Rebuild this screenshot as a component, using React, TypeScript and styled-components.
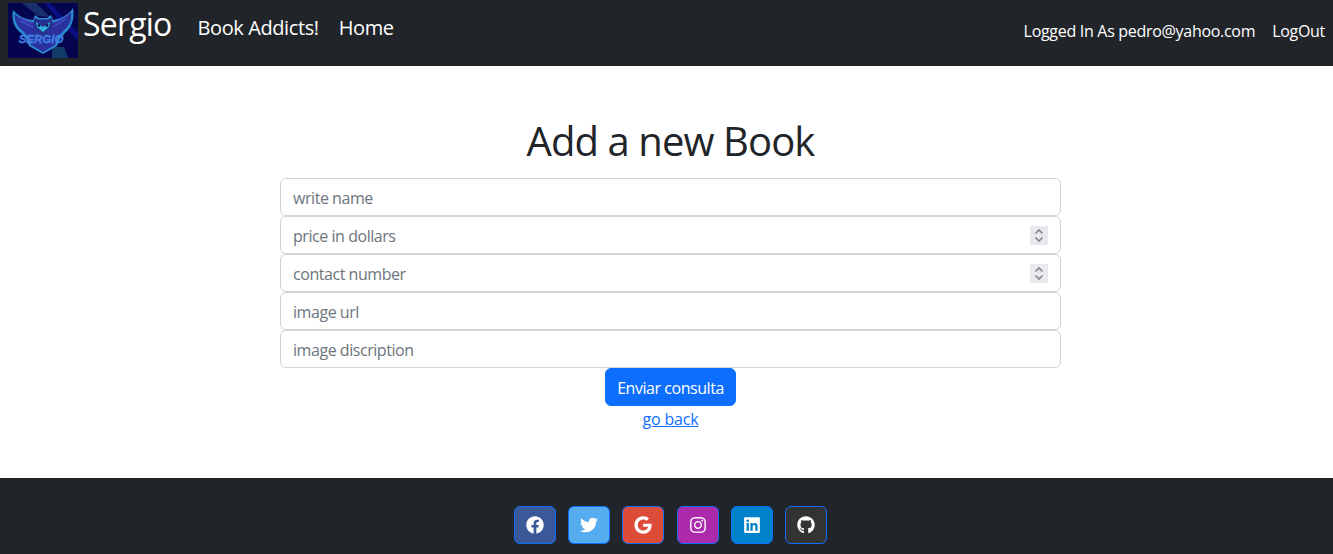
import React from "react";
import styled, { createGlobalStyle } from "styled-components";
import { FaFacebook, FaTwitter, FaGoogle, FaInstagram, FaLinkedin, FaGithub } from "react-icons/fa";

const Global = createGlobalStyle`
  html, body { margin: 0; padding: 0; background: #fff; }
  body { font-family: "Open Sans", "Noto Sans", "Liberation Sans", sans-serif; font-size: 16px; color: #212529; }
  * { box-sizing: border-box; }
`;

const Page = styled.div`
  display: flex;
  flex-direction: column;
  height: 554px;
  overflow: hidden;
`;

const Navbar = styled.nav`
  flex: 0 0 66px;
  background: #212529;
  display: flex;
  align-items: flex-start;
  padding: 3px 8px 0;
  color: #fff;
`;

const Logo = styled.svg`
  width: 70px;
  height: 55px;
  display: block;
  flex: none;
`;

const Brand = styled.a`
  font-size: 32px;
  line-height: 40px;
  margin: 1px 0 0 5px;
  letter-spacing: -0.8px;
`;

const NavLinks = styled.div`
  display: flex;
  gap: 20px;
  margin: 9px 0 0 26px;
`;

const NavLink = styled.a`
  font-size: 20px;
  line-height: 32px;
  letter-spacing: -0.4px;
`;

const Right = styled.div`
  margin-left: auto;
  display: flex;
  gap: 17px;
  margin-top: 16px;
`;

const RightLink = styled.a`
  font-size: 16px;
  line-height: 24px;
  letter-spacing: -0.3px;
`;

const Main = styled.main`
  flex: 1;
  display: flex;
  flex-direction: column;
  align-items: center;
  padding: 47px 0 0 8px;
`;

const Title = styled.h1`
  margin: 0 0 9px;
  font-weight: 400;
  font-size: 40px;
  line-height: 56px;
  letter-spacing: -0.9px;
`;

const Form = styled.form`
  width: 781px;
  display: flex;
  flex-direction: column;
  align-items: center;
`;

const FieldWrap = styled.div`
  position: relative;
  width: 100%;
`;

const Field = styled.input`
  display: block;
  width: 100%;
  height: 38px;
  padding: 7px 12px 5px;
  border: 1px solid #ced4da;
  border-radius: 6px;
  font: inherit;
  letter-spacing: -0.45px;
  color: #212529;
  background: #fff;
  outline: none;
  appearance: textfield;
  &::placeholder { color: #6c757d; opacity: 1; }
  &::-webkit-inner-spin-button, &::-webkit-outer-spin-button { appearance: none; margin: 0; }
`;

const Spinner = styled.svg`
  position: absolute;
  top: 10px;
  right: 13px;
  width: 18px;
  height: 19px;
  background: #e9e9ed;
`;

const Submit = styled.button`
  height: 38px;
  width: 131px;
  padding: 2px 0 0;
  border: 1px solid #0d6efd;
  border-radius: 6px;
  background: #0d6efd;
  color: #fff;
  font: inherit;
  letter-spacing: -0.45px;
`;

const Back = styled.a`
  margin-top: 1px;
  color: #0d6efd;
  text-decoration: underline;
  line-height: 24px;
  letter-spacing: -0.2px;
`;

const Footer = styled.footer`
  flex: 0 0 76px;
  background: #212529;
  display: flex;
  justify-content: center;
  gap: 12.2px;
  padding: 28px 0 0 8px;
`;

const Social = styled.a<{ $bg: string }>`
  width: 42px;
  height: 38px;
  display: flex;
  align-items: center;
  justify-content: center;
  background: ${(p) => p.$bg};
  border: 1px solid #0d6efd;
  border-radius: 6px;
  color: #fff;
  font-size: 18px;
`;

const socials = [
  { bg: "#3b5998", icon: <FaFacebook /> },
  { bg: "#55acee", icon: <FaTwitter /> },
  { bg: "#dd4b39", icon: <FaGoogle /> },
  { bg: "#ac2bac", icon: <FaInstagram /> },
  { bg: "#0082ca", icon: <FaLinkedin /> },
  { bg: "#333333", icon: <FaGithub /> },
];

const OwlLogo = () => (
  <Logo viewBox="0 0 70 55" aria-label="Sergio logo">
    <rect width="70" height="55" fill="#05054f" />
    <path d="M14 0 L28 0 L42 14 L30 13 Z" fill="#1a2f6e" />
    <path d="M36 0 L42 0 L70 30 L70 38 Z" fill="#0a0f86" />
    <path d="M44 44 L56 44 L60 55 L44 55 Z" fill="#123a6a" />
    <path d="M5 7 C3 16 6 25 13 30 L18 36 L21 43 L35 51 L49 43 L52 36 L57 30 C64 25 67 14 65 5 C61 11 55 15 45 17 L43 12 L39 15 L31 15 L27 12 L25 17 C15 16 9 12 5 7 Z" fill="#2a8ad0" />
    <path d="M7 11 C6 17 9 24 15 28 L20 34 L23 42 L35 49 L47 42 L50 34 L55 28 C61 24 64 17 63 9 C59 14 53 18 45 19 L35 33 L25 19 C17 18 11 15 7 11 Z" fill="#2b32a0" />
    <path d="M12 18 L25 24 M10 14 L24 20 M58 16 L45 24 M60 12 L46 20" stroke="#3f4fc4" strokeWidth="1.4" fill="none" />
    <path d="M26 15 L31 16.5 L39 16.5 L44 15 L44 24 L35 35 L26 24 Z" fill="#27308f" />
    <path d="M28 19 L35 24 L42 19 L41 24 L35 29 L29 24 Z" fill="#2fb0d8" />
    <circle cx="31" cy="22.5" r="1.4" fill="#0b1a60" />
    <circle cx="39" cy="22.5" r="1.4" fill="#0b1a60" />
    <text x="33" y="39.5" textAnchor="middle" fontSize="11.5" fontStyle="italic" fontWeight="700" fontFamily="Liberation Sans, sans-serif" fill="#4a6ee8" stroke="#2fa0e0" strokeWidth="0.3">SERGIO</text>
  </Logo>
);

const SpinIcon = () => (
  <Spinner viewBox="0 0 18 19" aria-hidden="true">
    <path d="M5.5 7.5 L9 4 L12.5 7.5 M5.5 11.5 L9 15 L12.5 11.5" fill="none" stroke="#85858e" strokeWidth="1.6" />
  </Spinner>
);

export default function App() {
  return (
    <Page>
      <Global />
      <Navbar>
        <OwlLogo />
        <Brand>Sergio</Brand>
        <NavLinks>
          <NavLink>Book Addicts!</NavLink>
          <NavLink>Home</NavLink>
        </NavLinks>
        <Right>
          <RightLink>Logged In As pedro@yahoo.com</RightLink>
          <RightLink>LogOut</RightLink>
        </Right>
      </Navbar>
      <Main>
        <Title>Add a new Book</Title>
        <Form>
          <FieldWrap><Field placeholder="write name" /></FieldWrap>
          <FieldWrap><Field type="number" placeholder="price in dollars" /><SpinIcon /></FieldWrap>
          <FieldWrap><Field type="number" placeholder="contact number" /><SpinIcon /></FieldWrap>
          <FieldWrap><Field placeholder="image url" /></FieldWrap>
          <FieldWrap><Field placeholder="image discription" /></FieldWrap>
          <Submit type="button">Enviar consulta</Submit>
          <Back href="#">go back</Back>
        </Form>
      </Main>
      <Footer>
        {socials.map((s) => (
          <Social key={s.bg} $bg={s.bg}>{s.icon}</Social>
        ))}
      </Footer>
    </Page>
  );
}
